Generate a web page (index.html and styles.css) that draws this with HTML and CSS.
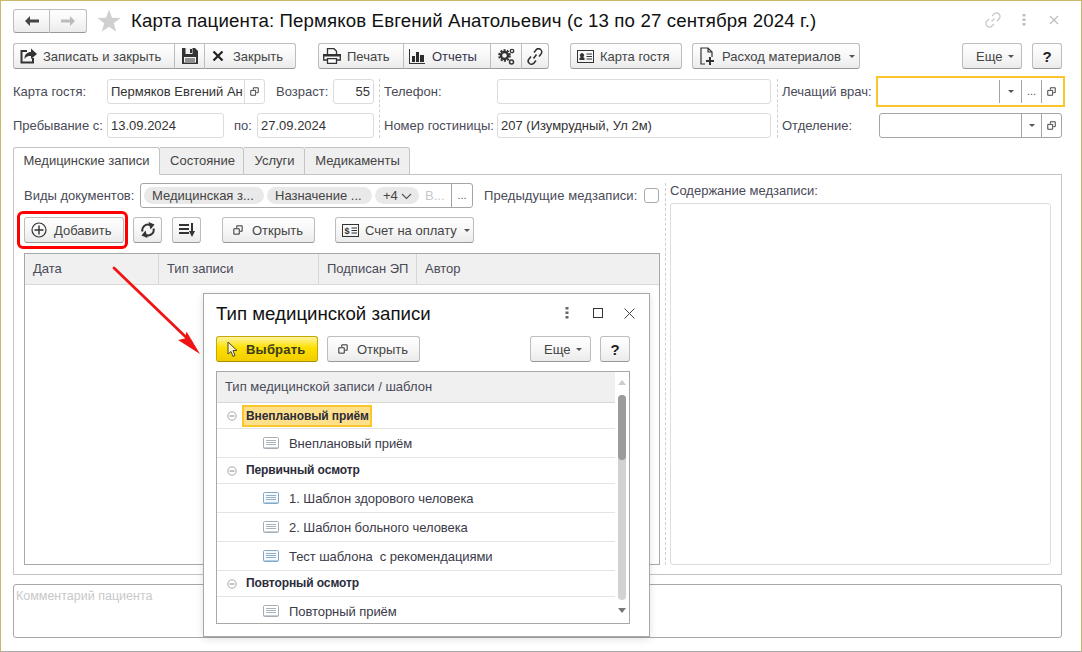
FILE: index.html
```html
<!DOCTYPE html>
<html lang="ru">
<head>
<meta charset="utf-8">
<title>Карта пациента</title>
<link rel="stylesheet" href="styles.css">
</head>
<body>
<svg class="defs" width="0" height="0">
  <symbol id="open" viewBox="0 0 12 12"><path d="M4.500 3.500V1h6.500v6.500H8.500M1 4.500h6.500V11H1z" fill="none" stroke="#333" stroke-width="1.200"/></symbol>
  <symbol id="doc" viewBox="0 0 16 12"><rect x=".5" y=".5" width="15" height="11" rx="1" fill="#fff" stroke="#a4aeb8"/><path d="M3 3.500h10M3 5.500h10M3 7.500h10" stroke="#aab2ba"/><path d="M1 10.500h14" stroke="#c8ced4"/></symbol>
  <symbol id="doc-b" viewBox="0 0 16 12"><rect x=".5" y=".5" width="15" height="11" rx="1" fill="#f4f9fd" stroke="#84a9c6"/><path d="M3 3.500h10M3 5.500h10M3 7.500h10" stroke="#8fb0ca"/><path d="M1 10.500h14" stroke="#b6cde0"/></symbol>
  <symbol id="minus" viewBox="0 0 10 10"><circle cx="5" cy="5" r="4.200" fill="#fff" stroke="#a8a8a8"/><path d="M2.500 5h5" stroke="#888"/></symbol>
</svg>
<div class="window">
  <header class="titlebar">
    <div class="nav">
      <button class="btn center nav-btn"><svg width="16" height="12" viewBox="0 0 16 12"><path d="M1 6l5-5v3.500h9v3H6V11z" fill="#444"/></svg></button>
      <button class="btn center nav-btn"><svg width="16" height="12" viewBox="0 0 16 12"><path d="M15 6l-5-5v3.500H1v3h9V11z" fill="#bbb"/></svg></button>
    </div>
    <svg class="star" width="24" height="24" viewBox="0 0 24 24"><path d="M12 .5l3 8.200 8.600.3-6.800 5.300 2.400 8.400L12 17.800l-7.200 4.900 2.400-8.400L.4 9l8.600-.3z" fill="#d0d0d0"/></svg>
    <h1 class="title">Карта пациента: Пермяков Евгений Анатольевич (с 13 по 27 сентября 2024 г.)</h1>
    <div class="win-icons">
      <svg width="18" height="18" viewBox="0 0 18 18"><path d="M7.500 10.500l3-3M8 5l2-2a3 3 0 0 1 5 5l-2 2M10 13l-2 2a3 3 0 0 1-5-5l2-2" fill="none" stroke="#c8c8c8" stroke-width="1.300"/></svg>
      <svg class="dots" width="4" height="12" viewBox="0 0 4 12"><path d="M0.500 0h3v2.500h-3zM0.500 4.500h3V7h-3zM0.500 9h3v2.500h-3z" fill="#bdbdbd"/></svg>
      <svg class="close" width="10" height="10" viewBox="0 0 10 10"><path d="M1 1l8 8M9 1l-8 8" stroke="#bbb" stroke-width="1.100"/></svg>
    </div>
  </header>

  <div class="toolbar">
    <div class="group g1">
      <button class="btn seg w-save-close"><svg width="17" height="16" viewBox="0 0 17 16"><path d="M7 3H1.500v11.500H13V10" fill="none" stroke="#333" stroke-width="2"/><path d="M4.500 11c0-5 3-7 6.500-7V.5L17 6l-6 5V8c-3 0-5 .5-6.500 3z" fill="#333"/></svg><span>Записать и закрыть</span></button>
      <button class="btn center seg w-save"><svg width="16" height="16" viewBox="0 0 16 16"><path d="M0 0h13l3 3v13H0z" fill="#333"/><path d="M3.500 0h7v6h-7zM2 9h12v5.500H2z" fill="#f2f2f2"/><path d="M8 1h2v4H8zM3 10.500h10v1H3zM3 12.500h10v1H3z" fill="#333"/></svg></button>
      <button class="btn seg w-close"><svg width="12" height="12" viewBox="0 0 12 12"><path d="M1.500 1.500l9 9M10.500 1.500l-9 9" stroke="#222" stroke-width="2.200"/></svg><span>Закрыть</span></button>
    </div>
    <div class="group g2">
      <button class="btn seg w-print"><svg width="18" height="16" viewBox="0 0 18 16"><path d="M4.500 6V.7h6.500l2.500 2.500V6" fill="none" stroke="#333" stroke-width="1.300"/><path d="M0 6h18v2.500H0z" fill="#333"/><path d="M.7 8v4h16.600V8" fill="none" stroke="#333" stroke-width="1.300"/><path d="M4.500 10.700h9v4.600h-9z" fill="#fff" stroke="#333" stroke-width="1.300"/></svg><span>Печать</span></button>
      <button class="btn seg w-rep"><svg width="16" height="15" viewBox="0 0 16 15"><path d="M0 0h1v14h15v1H0z" fill="#333"/><path d="M3 7h3v6H3zM7 3h3v10H7zM11 6h4v7h-4z" fill="#2c2c2c"/></svg><span class="dark">Отчеты</span></button>
      <button class="btn center seg w-icon"><svg width="17" height="17" viewBox="0 0 17 17"><circle cx="6.500" cy="7.500" r="3.500" fill="none" stroke="#333" stroke-width="2.400"/><circle cx="6.500" cy="7.500" r="5.400" fill="none" stroke="#333" stroke-width="1.800" stroke-dasharray="2.100 1.300"/><circle cx="14" cy="3" r="1.700" fill="none" stroke="#333" stroke-width="1.300"/><circle cx="13.500" cy="14" r="2" fill="none" stroke="#333" stroke-width="1.500"/></svg></button>
      <button class="btn center seg w-icon w-link"><svg width="16" height="17" viewBox="0 0 16 17"><path d="M6.500 10.500l3-4M7 4.500l2-2.500a3 3 0 0 1 5 4l-2 2.500M9 12.500L7 15a3 3 0 0 1-5-4l2-2.500" fill="none" stroke="#333" stroke-width="1.600"/></svg></button>
    </div>
    <button class="btn w-guest"><svg width="17" height="13" viewBox="0 0 17 13"><rect x=".5" y=".5" width="16" height="12" fill="none" stroke="#333"/><path d="M2.500 10V8l1.500-1a2 2 0 1 1 2 0l1.500 1v2z" fill="#333"/><path d="M9.500 4H15M9.500 6.500H15M9.500 9H15" stroke="#333"/></svg><span>Карта гостя</span></button>
    <button class="btn w-exp"><svg width="14" height="18" viewBox="0 0 14 18"><path d="M5 17H1V1h7l4 4v5M8 1v4h4" fill="none" stroke="#333" stroke-width="1.200"/><path d="M9 10h2v3h3v2h-3v3H9v-3H6v-2h3z" fill="#333"/></svg><span>Расход материалов</span><i class="caret"></i></button>
    <button class="btn w-more push"><span>Еще</span><i class="caret"></i></button>
    <button class="btn center w-help"><b>?</b></button>
  </div>

  <div class="fields">
    <div class="col col-a">
      <div class="row">
        <label class="lbl l-a">Карта гостя:</label>
        <div class="inp i-guest"><span class="val clip">Пермяков Евгений Ан</span><span class="cell"><svg width="9" height="9"><use href="#open"/></svg></span></div>
        <label class="lbl l-age">Возраст:</label>
        <div class="inp i-age"><span class="val align-r">55</span></div>
      </div>
      <div class="row">
        <label class="lbl l-a">Пребывание с:</label>
        <div class="inp i-date"><span class="val">13.09.2024</span></div>
        <label class="lbl l-to">по:</label>
        <div class="inp i-date"><span class="val">27.09.2024</span></div>
      </div>
    </div>
    <div class="col col-b">
      <div class="row">
        <label class="lbl l-b">Телефон:</label>
        <div class="inp i-wide"></div>
      </div>
      <div class="row">
        <label class="lbl l-b">Номер гостиницы:</label>
        <div class="inp i-wide"><span class="val">207 (Изумрудный, Ул 2м)</span></div>
      </div>
    </div>
    <div class="col col-c">
      <div class="row">
        <label class="lbl l-c">Лечащий врач:</label>
        <div class="inp i-sel focus"><span class="val"></span><span class="cell dark-seam"><i class="caret"></i></span><span class="cell dark-seam dots3">...</span><span class="cell dark-seam"><svg width="9" height="9"><use href="#open"/></svg></span></div>
      </div>
      <div class="row">
        <label class="lbl l-c">Отделение:</label>
        <div class="inp i-sel strong"><span class="val"></span><span class="cell dark-seam"><i class="caret"></i></span><span class="cell dark-seam"><svg width="9" height="9"><use href="#open"/></svg></span></div>
      </div>
    </div>
  </div>

  <div class="tabs">
    <div class="tab active t1">Медицинские записи</div>
    <div class="tab t2">Состояние</div>
    <div class="tab t3">Услуги</div>
    <div class="tab t4">Медикаменты</div>
  </div>
  <section class="panel">
    <div class="left">
      <div class="row doc-row">
        <label class="lbl l-doc">Виды документов:</label>
        <div class="inp i-tags">
          <span class="tags">
            <span class="tag t-a">Медицинская з...</span>
            <span class="tag t-b">Назначение ...</span>
            <span class="tag t-c">+4 <svg width="11" height="7" viewBox="0 0 11 7"><path d="M1 1l4.500 4.500L10 1" fill="none" stroke="#555" stroke-width="1.100"/></svg></span>
            <span class="more-tag">В...</span>
          </span>
          <span class="cell dark-seam dots3 c-dots">...</span>
        </div>
        <label class="lbl l-prev">Предыдущие медзаписи:</label>
        <span class="check"></span>
      </div>
      <div class="row act-row">
        <button class="btn add"><svg width="16" height="16" viewBox="0 0 16 16"><circle cx="8" cy="8" r="7" fill="none" stroke="#333" stroke-width="1.200"/><path d="M8 3.500v9M3.500 8h9" stroke="#333" stroke-width="1.400"/></svg><span>Добавить</span></button>
        <button class="btn center ic"><svg width="14" height="16" viewBox="0 0 14 16"><path d="M1.500 9.500A5.500 5.500 0 0 1 9 3" fill="none" stroke="#333" stroke-width="2"/><path d="M7.500 0l6 2.500-4 5z" fill="#333"/><path d="M12.500 6.500A5.500 5.500 0 0 1 5 13" fill="none" stroke="#333" stroke-width="2"/><path d="M6.500 16l-6-2.500 4-5z" fill="#333"/></svg></button>
        <button class="btn center ic ic2"><svg width="16" height="14" viewBox="0 0 16 14"><path d="M0 2h10M0 6h10M0 10h10" stroke="#333" stroke-width="1.800"/><path d="M12 0h2v8h2l-3 6-3-6h2z" fill="#333"/></svg></button>
        <button class="btn w-open open-m"><svg width="10" height="10"><use href="#open"/></svg><span>Открыть</span></button>
        <button class="btn w-bill"><svg width="17" height="13" viewBox="0 0 17 13"><rect x=".5" y=".5" width="16" height="12" fill="none" stroke="#333"/><path d="M9.500 4H15M9.500 6.500H15M9.500 9H15" stroke="#333"/><text x="2.500" y="10" class="dollar">$</text></svg><span>Счет на оплату</span><i class="caret"></i></button>
      </div>
      <div class="table">
        <div class="thead">
          <span class="th c1">Дата</span><span class="th c2">Тип записи</span><span class="th c3">Подписан ЭП</span><span class="th c4">Автор</span>
        </div>
      </div>
    </div>
    <div class="vsep"></div>
    <div class="right">
      <label class="lbl content-lbl">Содержание медзаписи:</label>
      <div class="area"></div>
    </div>
  </section>
  <div class="comment">Комментарий пациента</div>
</div>

<svg class="arrow" width="100" height="100" viewBox="0 0 100 100"><path d="M3 3L80 77" stroke="#f01414" stroke-width="2.800" stroke-linecap="round"/><path d="M89 89L67 75l7-1.500 1.500-7z" fill="#f01414"/></svg>

<div class="red-mark"></div>

<div class="dialog">
  <div class="dlg-head">
    <h2 class="dlg-title">Тип медицинской записи</h2>
    <div class="dlg-icons">
      <svg class="dlg-dots" width="4" height="12" viewBox="0 0 4 12"><path d="M0.500 0h3v2.500h-3zM0.500 4.500h3V7h-3zM0.500 9h3v2.500h-3z" fill="#666"/></svg>
      <svg width="10" height="10" viewBox="0 0 10 10"><rect x=".5" y=".5" width="9" height="9" fill="none" stroke="#333"/></svg>
      <svg width="11" height="11" viewBox="0 0 11 11"><path d="M.5.500l10 10M10.500.500l-10 10" stroke="#444"/></svg>
    </div>
  </div>
  <div class="dlg-bar">
    <button class="btn primary"><svg width="12" height="17" viewBox="0 0 12 17"><path d="M1 1v12l3-2.500 2 5 2-1-2-5h4z" fill="#fff4b8" stroke="#444"/></svg><span>Выбрать</span></button>
    <button class="btn w-open"><svg width="10" height="10"><use href="#open"/></svg><span>Открыть</span></button>
    <button class="btn w-more w-more2 push"><span>Еще</span><i class="caret"></i></button>
    <button class="btn center w-help"><b>?</b></button>
  </div>
  <div class="tree">
    <div class="tree-main">
      <div class="tree-head">Тип медицинской записи / шаблон</div>
      <div class="tr grp g-cur"><svg width="10" height="10"><use href="#minus"/></svg><span class="cur">Внеплановый приём</span></div>
      <div class="tr item"><svg width="16" height="12"><use href="#doc"/></svg><span>Внеплановый приём</span></div>
      <div class="tr grp"><svg width="10" height="10"><use href="#minus"/></svg><span class="gt">Первичный осмотр</span></div>
      <div class="tr item"><svg width="16" height="12"><use href="#doc-b"/></svg><span>1. Шаблон здорового человека</span></div>
      <div class="tr item"><svg width="16" height="12"><use href="#doc"/></svg><span>2. Шаблон больного человека</span></div>
      <div class="tr item"><svg width="16" height="12"><use href="#doc-b"/></svg><span>Тест шаблона&nbsp; с рекомендациями</span></div>
      <div class="tr grp"><svg width="10" height="10"><use href="#minus"/></svg><span class="gt">Повторный осмотр</span></div>
      <div class="tr item last"><svg width="16" height="12"><use href="#doc"/></svg><span>Повторный приём</span></div>
    </div>
    <div class="scroll">
      <i class="up"></i>
      <div class="track"><div class="thumb"></div></div>
      <i class="down"></i>
    </div>
  </div>
</div>
</body>
</html>
```
FILE: styles.css
```css
* { box-sizing: border-box; }
html, body { margin: 0; padding: 0; }
body {
  width: 1082px; height: 652px; overflow: hidden; position: relative;
  background: #fff; color: #333;
  font: 13px/15px "Liberation Sans", Arial, sans-serif;
}
.defs { position: absolute; }
button { font: inherit; padding: 0; margin: 0; }

.window {
  width: 1082px; height: 652px;
  border-top: 1px solid #c9b968; border-left: 1px solid #c9b968; border-right: 1px solid #c9b968;
  border-bottom: 1px solid #a9a9a9;
  padding: 8px 19px 0 12px;
  display: flex; flex-direction: column;
}

.btn {
  display: inline-flex; align-items: center; justify-content: flex-start; gap: 7px;
  height: 26px; color: #444; cursor: default;
  background: linear-gradient(#ffffff, #f7f7f7 50%, #ebebeb);
  border: 1px solid #bdbdbd; border-bottom-color: #999;
  border-radius: 3px; flex: none;
  font-size: 13px;
}
.center { justify-content: center; }
.caret { display: inline-block; width: 0; height: 0; border: 3.500px solid transparent; border-top: 3.500px solid #555; border-bottom: 0; flex: none; }

.titlebar { display: flex; align-items: center; height: 24px; flex: none; }
.nav { display: flex; width: 74px; }
.nav-btn { height: 24px; width: 37px; border-radius: 3px 0 0 3px; }
.nav-btn + .nav-btn { border-left: 0; border-radius: 0 3px 3px 0; }
.star { margin-left: 10px; }
.title { margin: 0 0 0 10px; font: 400 18.670px/24px "Liberation Sans", Arial, sans-serif; letter-spacing: .13px; color: #111; white-space: nowrap; }
.win-icons { margin-left: auto; display: flex; align-items: center; gap: 17px; margin-top: -2px; margin-right: 3px; }
.win-icons .dots { margin-left: 3px; }
.win-icons .close { margin-left: 6px; }

.toolbar { display: flex; margin-top: 10px; flex: none; }
.group { display: flex; }
.g1 { width: 283px; }
.g2 { margin-left: 22px; }
.seg { border-radius: 0; border-right: 0; }
.group .seg:first-child { border-radius: 3px 0 0 3px; }
.group .seg:last-child { border-radius: 0 3px 3px 0; border-right: 1px solid #bdbdbd; }
.w-save-close { width: 161px; padding-left: 6px; gap: 6px; }
.w-save { width: 30px; }
.w-close { width: 92px; padding-left: 7px; gap: 9px; }
.w-print { width: 85px; padding-left: 4px; gap: 6px; }
.w-rep { width: 87px; padding-left: 5px; gap: 7px; }
.w-icon { width: 31px; }
.w-link { width: 28px; }
.dark { color: #35354d; }
.w-guest { width: 112px; margin-left: 21px; padding-left: 6px; gap: 6px; }
.w-exp { width: 168px; margin-left: 10px; padding-left: 7px; gap: 8px; }
.w-more { width: 60px; padding-left: 13px; gap: 6px; }
.w-more2 { width: 61px; }
.push { margin-left: auto; }
.w-help { width: 30px; margin-left: 10px; }
.w-help b { font-size: 15px; font-weight: 700; color: #222; }

.fields { display: flex; margin-top: 10px; flex: none; }
.col { display: flex; flex-direction: column; gap: 9px; flex: none; }
.col-a { width: 361px; }
.col-b { width: 387px; margin-left: 10px; }
.col-c { margin-left: 11px; }
.col-b, .col-c { position: relative; }
.col-b::before, .col-c::before {
  content: ""; position: absolute; left: -5px; top: 0; bottom: 0;
  border-left: 1px dashed #cfcfcf;
}
.row { display: flex; align-items: center; height: 25px; }
.lbl { color: #4a4a58; white-space: nowrap; flex: none; }
.l-a { width: 94px; }
.l-age { margin-left: 11px; width: 57px; }
.l-to { margin-left: 10px; width: 23px; }
.l-b { width: 113px; }
.l-c { width: 97px; }

.inp {
  display: flex; height: 25px; border: 1px solid #dcdcdc; border-radius: 3px;
  background: #fff; flex: none;
}
.val { flex: 1; min-width: 0; padding: 0 3px; line-height: 23px; color: #333; white-space: nowrap; }
.clip { overflow: hidden; padding-right: 0; }
.align-r { text-align: right; }
.cell { display: flex; align-items: center; justify-content: center; width: 20px; border-left: 1px solid #dcdcdc; flex: none; }
.dark-seam { border-left-color: #a5a5a5; }
.dots3 { color: #555; font-size: 11px; }
.i-guest { width: 158px; }
.i-age { width: 41px; }
.i-date { width: 117px; }
.i-wide { width: 274px; }
.i-sel { width: 183px; }
.strong { border-color: #a5a5a5; }
.focus { border-color: transparent; border-radius: 0; outline: 2px solid #fbc52c; outline-offset: 1px; }
.focus .cell:nth-child(2) { width: 22px; }

.tabs { display: flex; margin-top: 9px; height: 28px; position: relative; z-index: 1; flex: none; }
.tab {
  height: 28px; border: 1px solid #c4c4c4; border-left: 0; border-radius: 0 3px 0 0;
  background: #efefef; color: #444; line-height: 26px; text-align: center;
}
.tab.active { background: #fff; border-left: 1px solid #c4c4c4; border-bottom-color: #fff; border-radius: 3px 3px 0 0; }
.t1 { width: 147px; }
.t2 { width: 84px; padding-left: 2px; }
.t3 { width: 61px; padding-left: 1px; }
.t4 { width: 105px; padding-left: 1px; }

.panel {
  margin-top: -1px; height: 401px; border: 1px solid #c4c4c4;
  padding: 8px 10px 9px 10px; display: flex; flex: none;
}
.left { width: 636px; flex: none; display: flex; flex-direction: column; }
.doc-row { height: 25px; flex: none; }
.l-doc { width: 116px; }
.i-tags { width: 333px; border-color: #a5a5a5; }
.tags { flex: 1; display: flex; align-items: center; gap: 3px; padding-left: 3px; min-width: 0; }
.tag { height: 17px; line-height: 17px; border-radius: 9px; background: #e9e9e9; color: #444; white-space: nowrap; padding-left: 8px; flex: none; }
.t-a { width: 120px; }
.t-b { width: 105px; }
.t-c { width: 44px; }
.more-tag { color: #c9c9c9; margin-left: 3px; white-space: nowrap; }
.c-dots { width: 21px; }
.l-prev { margin-left: 11px; width: 160px; letter-spacing: .08px; }
.check { width: 15px; height: 15px; border: 1px solid #aaa; border-radius: 3px; flex: none; }
.act-row { margin-top: 9px; height: 26px; flex: none; }
.add { width: 100px; padding-left: 6px; }
.ic { width: 29px; margin-left: 9px; }
.ic2 { margin-left: 10px; }
.w-open { width: 93px; padding-left: 10px; gap: 9px; }
.open-m { margin-left: 21px; }
.w-bill { width: 139px; margin-left: 20px; padding-left: 6px; gap: 6px; }
.w-bill .caret { margin-left: 1px; }
.dollar { font: 700 9px "Liberation Sans", sans-serif; fill: #333; }

.table { margin-top: 10px; flex: 1; border: 1px solid #a8a8a8; }
.thead { display: flex; height: 31px; background: #f0f0f0; border-bottom: 1px solid #d8d8d8; }
.th { padding: 0 8px; line-height: 29px; color: #4a4a58; border-right: 1px solid #d8d8d8; white-space: nowrap; overflow: hidden; }
.c1 { width: 134px; }
.c2 { width: 160px; }
.c3 { width: 98px; padding-right: 0; }
.c4 { flex: 1; border-right: 0; }

.vsep { width: 0; margin-left: 5px; border-left: 1px dashed #cfcfcf; flex: none; }
.right { margin-left: 4px; width: 381px; display: flex; flex-direction: column; flex: none; }
.content-lbl { height: 20px; line-height: 16px; }
.area { flex: 1; border: 1px solid #dcdcdc; border-radius: 3px; }

.comment {
  margin-top: 9px; height: 54px; border: 1px solid #a8a8a8; border-radius: 3px;
  padding: 3px 2px; color: #c8c8c8; font-size: 12.500px; line-height: 16px; flex: none;
}

.arrow { position: absolute; left: 111px; top: 265px; z-index: 3; }
.red-mark {
  position: absolute; left: 17px; top: 211px; width: 111px; height: 38px;
  border: 3px solid #f00; border-radius: 6px; z-index: 2;
}

.dialog {
  position: absolute; left: 203px; top: 293px; width: 447px; height: 344px;
  background: #fff; border: 1px solid #a8a8a8; z-index: 4;
  box-shadow: 0 2px 8px rgba(0,0,0,.12);
  padding: 0 19px 0 12px; display: flex; flex-direction: column;
}
.dlg-head { display: flex; align-items: center; height: 42px; padding-bottom: 2px; flex: none; }
.dlg-title { margin: 0; font: 400 18.670px/24px "Liberation Sans", Arial, sans-serif; color: #111; }
.dlg-icons { margin-left: auto; margin-right: -5px; display: flex; align-items: center; gap: 21px; margin-top: -2px; }
.dlg-dots { margin-right: 3px; }
.dlg-bar { display: flex; height: 26px; gap: 9px; flex: none; }
.dlg-bar .w-help { margin-left: 0; }
.primary {
  width: 102px; padding-left: 10px; gap: 7px; color: #3a3a20; font-weight: 700; letter-spacing: .2px;
  background: linear-gradient(#fff3a0, #fde000 45%, #f2cd00);
  border-color: #c8a800; border-bottom-color: #a98e00;
}
.tree { margin-top: 9px; height: 253px; border: 1px solid #a8a8a8; display: flex; flex: none; overflow: hidden; }
.tree-main { width: 398px; flex: none; }
.tree-head { height: 31px; line-height: 30px; padding-left: 8px; background: #f0f0f0; border-bottom: 1px solid #d8d8d8; color: #4a4a58; }
.tr { display: flex; align-items: center; border-bottom: 1px solid #e4e4e4; }
.grp { height: 26px; padding-left: 10px; font-size: 12px; letter-spacing: -.1px; font-weight: 700; color: #2c2c3a; }
.grp .gt { margin-left: 9px; }
.grp svg { flex: none; }
.cur {
  margin-left: 5px; height: 22px; width: 130px; line-height: 18px; padding-left: 2px;
  background: #ffe08a; border: 2px solid #fbc52c; white-space: nowrap;
}
.item { height: 29px; padding-left: 46px; color: #3a3a48; letter-spacing: -.06px; }
.item svg { flex: none; margin-right: 10px; }
.item.last { border-bottom: 0; height: 26px; padding-top: 2px; }
.scroll { flex: 1; display: flex; flex-direction: column; align-items: center; padding-top: 8px; }
.up { width: 0; height: 0; border: 4px solid transparent; border-bottom: 5px solid #ccc; border-top: 0; flex: none; }
.down { width: 0; height: 0; border: 4px solid transparent; border-top: 5px solid #777; border-bottom: 0; flex: none; margin-top: 8px; }
.track { margin-top: 10px; width: 8px; height: 205px; background: #d2d2d2; border-radius: 4px; flex: none; }
.thumb { height: 65px; background: #9b9b9b; border-radius: 4px; }
```
